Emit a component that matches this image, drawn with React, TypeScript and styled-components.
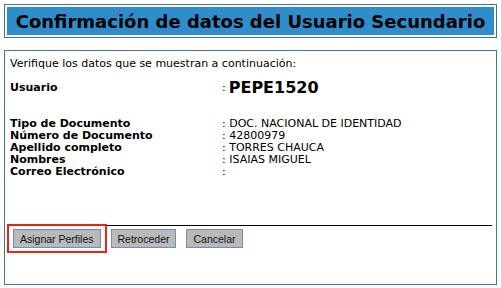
import React from 'react';
import styled, { createGlobalStyle } from 'styled-components';

const GlobalStyle = createGlobalStyle`
    html, body {
        margin: 0;
        padding: 0;
        background: #ffffff;
    }
    body {
        font-family: "DejaVu Sans", Verdana, sans-serif;
        color: #000000;
    }
`;

const Page = styled.div`
    width: 493px;
    padding: 4px;
`;

const TitleBox = styled.div`
    border: 1px solid #3a70ab;
    padding: 2px;
`;

const TitleBar = styled.h1`
    margin: 0;
    height: 28px;
    background: #2e8dca;
    display: flex;
    align-items: center;
    justify-content: center;
    font-size: 18px;
    font-weight: bold;
    color: #000000;
`;

const ContentBox = styled.div`
    margin-top: 12px;
    border: 1px solid #3f74b0;
    padding: 6px 4px 0 5px;
    box-sizing: border-box;
    height: 235px;
    display: flex;
    flex-direction: column;
`;

const Intro = styled.div`
    font-size: 11px;
    line-height: 13px;
`;

const DataGrid = styled.div`
    display: grid;
    grid-template-columns: 212px 1fr;
    font-size: 11px;
    line-height: 12px;
`;

const Label = styled.div`
    font-weight: bold;
`;

const Value = styled.div`
    white-space: nowrap;
`;

const UserRow = styled(DataGrid)`
    margin-top: 6px;
    align-items: center;
    height: 24px;
`;

const UserName = styled.span`
    font-size: 16px;
    font-weight: bold;
    margin-left: 3px;
    vertical-align: -2px;
`;

const DetailRows = styled(DataGrid)`
    margin-top: 18px;
`;

const Divider = styled.hr`
    margin: auto 0 3px 0;
    border: none;
    border-top: 1px solid #000000;
    height: 0;
`;

const ButtonRow = styled.div`
    display: flex;
    gap: 10px;
    padding-left: 3px;
    margin-bottom: 36px;
`;

const Highlight = styled.div`
    position: relative;
    display: flex;
    &::after {
        content: '';
        position: absolute;
        inset: -5px -6px -5px -6px;
        border: 2px solid #ee2211;
        pointer-events: none;
    }
`;

const Button = styled.button`
    height: 19px;
    padding: 0 6px;
    background: #b9b9b9;
    border: 1px solid #6d8fc0;
    font-family: "Liberation Sans", Arial, sans-serif;
    font-size: 10.5px;
    color: #111111;
    margin: 0;
`;

const details: [string, string][] = [
    ['Tipo de Documento', 'DOC. NACIONAL DE IDENTIDAD'],
    ['Número de Documento', '42800979'],
    ['Apellido completo', 'TORRES CHAUCA'],
    ['Nombres', 'ISAIAS MIGUEL'],
    ['Correo Electrónico', ''],
];

const App: React.FC = () => {
    return (
        <>
            <GlobalStyle />
            <Page>
                <TitleBox>
                    <TitleBar>Confirmación de datos del Usuario Secundario</TitleBar>
                </TitleBox>
                <ContentBox>
                    <Intro>Verifique los datos que se muestran a continuación:</Intro>
                    <UserRow>
                        <Label>Usuario</Label>
                        <Value>
                            :<UserName>PEPE1520</UserName>
                        </Value>
                    </UserRow>
                    <DetailRows>
                        {details.map(([label, value]) => (
                            <React.Fragment key={label}>
                                <Label>{label}</Label>
                                <Value>: {value}</Value>
                            </React.Fragment>
                        ))}
                    </DetailRows>
                    <Divider />
                    <ButtonRow>
                        <Highlight>
                            <Button>Asignar Perfiles</Button>
                        </Highlight>
                        <Button>Retroceder</Button>
                        <Button>Cancelar</Button>
                    </ButtonRow>
                </ContentBox>
            </Page>
        </>
    );
};

export default App;
